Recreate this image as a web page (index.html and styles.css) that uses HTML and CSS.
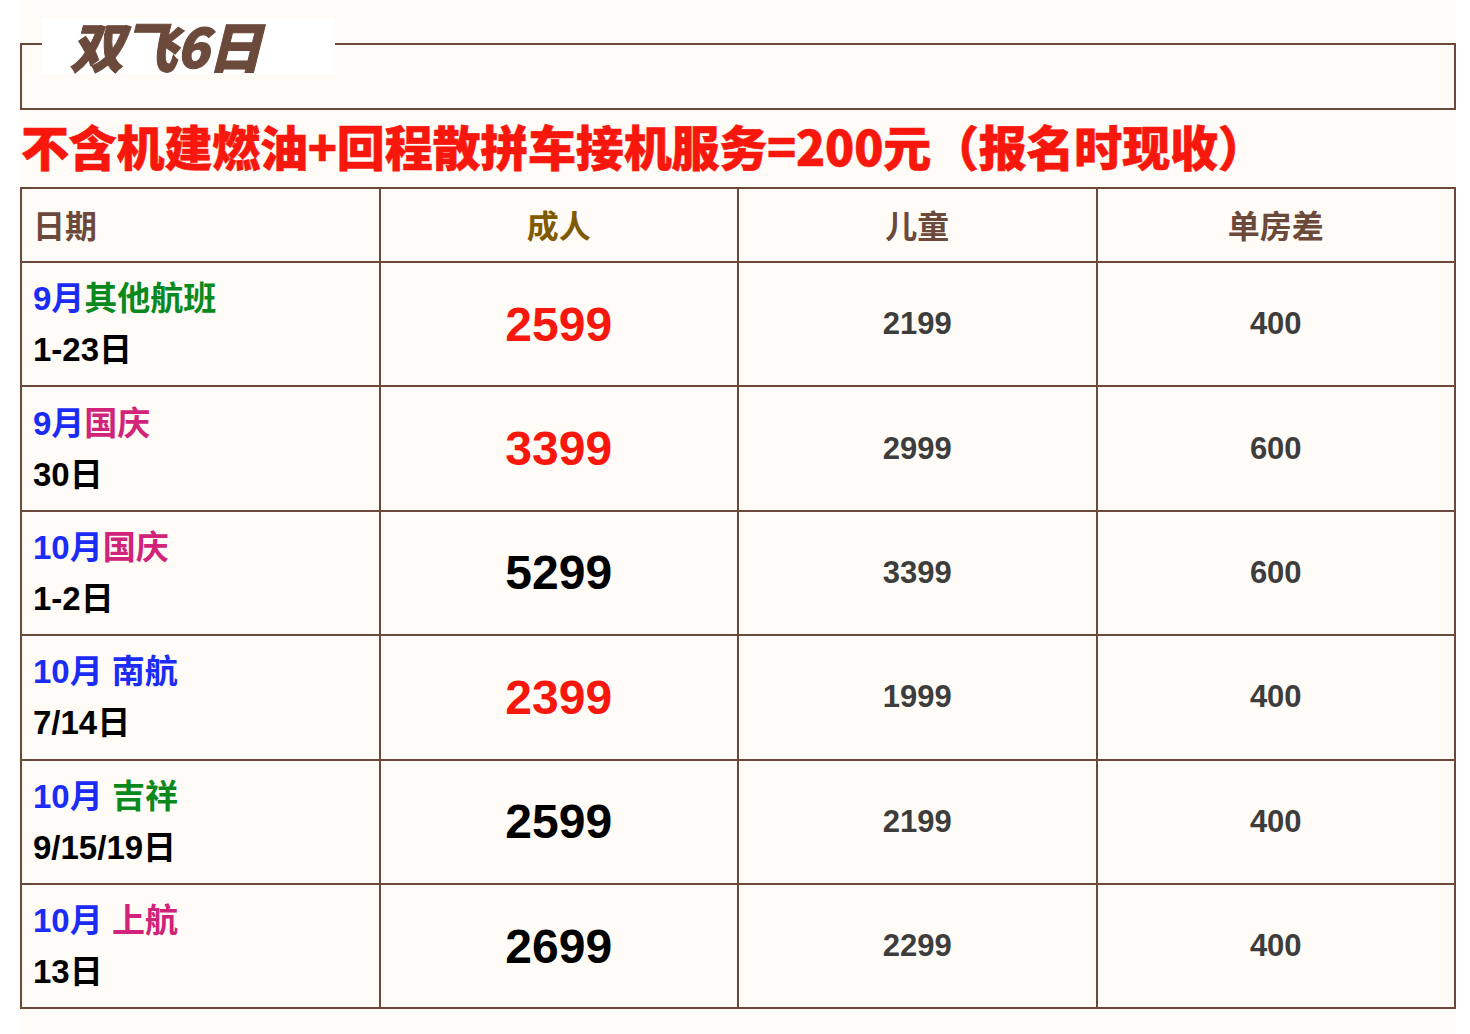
FILE: index.html
```html
<!DOCTYPE html>
<html lang="zh-CN">
<head>
<meta charset="utf-8">
<title>双飞6日</title>
<link rel="stylesheet" href="styles.css">
</head>
<body>
<div class="page">
  <div class="title-box">
    <div class="title-label">双飞6日</div>
  </div>
  <div class="notice">不含机建燃油+回程散拼车接机服务=200元（报名时现收）</div>
  <table class="price">
    <thead>
      <tr>
        <th class="c-date">日期</th>
        <th class="c-adult">成人</th>
        <th>儿童</th>
        <th>单房差</th>
      </tr>
    </thead>
    <tbody>
      <tr>
        <td class="c-date"><div class="l1"><span class="blue">9月</span><span class="green">其他航班</span></div><div class="l2">1-23日</div></td>
        <td class="adult red">2599</td>
        <td class="num">2199</td>
        <td class="num">400</td>
      </tr>
      <tr>
        <td class="c-date"><div class="l1"><span class="blue">9月</span><span class="pink">国庆</span></div><div class="l2">30日</div></td>
        <td class="adult red">3399</td>
        <td class="num">2999</td>
        <td class="num">600</td>
      </tr>
      <tr>
        <td class="c-date"><div class="l1"><span class="blue">10月</span><span class="pink">国庆</span></div><div class="l2">1-2日</div></td>
        <td class="adult">5299</td>
        <td class="num">3399</td>
        <td class="num">600</td>
      </tr>
      <tr>
        <td class="c-date"><div class="l1"><span class="blue">10月 南航</span></div><div class="l2">7/14日</div></td>
        <td class="adult red">2399</td>
        <td class="num">1999</td>
        <td class="num">400</td>
      </tr>
      <tr>
        <td class="c-date"><div class="l1"><span class="blue">10月 </span><span class="green">吉祥</span></div><div class="l2">9/15/19日</div></td>
        <td class="adult">2599</td>
        <td class="num">2199</td>
        <td class="num">400</td>
      </tr>
      <tr>
        <td class="c-date"><div class="l1"><span class="blue">10月 </span><span class="pink">上航</span></div><div class="l2">13日</div></td>
        <td class="adult">2699</td>
        <td class="num">2299</td>
        <td class="num">400</td>
      </tr>
    </tbody>
  </table>
</div>
</body>
</html>
```

FILE: styles.css
```css
html, body {
  margin: 0;
  padding: 0;
  background: #ffffff;
}
body {
  font-family: "Liberation Sans", "Noto Sans CJK SC", sans-serif;
}
.page {
  margin-left: 20px;
  width: 1436px;
  min-height: 1034px;
  background: #fffbf6;
  padding-top: 43px;
  box-sizing: border-box;
}
.title-box {
  position: relative;
  height: 63px;
  border: 2px solid #6b4a3c;
}
.title-label {
  position: absolute;
  left: 20px;
  top: -27px;
  width: 293px;
  height: 56px;
  background: #ffffff;
  box-sizing: border-box;
  padding-left: 28px;
  font-family: "Noto Sans CJK SC", sans-serif;
  font-weight: 900;
  font-style: italic;
  font-size: 54px;
  line-height: 54px;
  letter-spacing: -1px;
  color: #6b4a3c;
  -webkit-text-stroke: 1px #6b4a3c;
}
.notice {
  height: 77px;
  line-height: 71px;
  padding-bottom: 6px;
  box-sizing: border-box;
  padding-left: 1px;
  font-family: "Noto Sans CJK SC", sans-serif;
  font-weight: 900;
  font-size: 48px;
  letter-spacing: -0.2px;
  color: #f8170d;
  white-space: nowrap;
  -webkit-text-stroke: 0.6px #f8170d;
}
.price {
  width: 1436px;
  border-collapse: collapse;
  table-layout: fixed;
  border: 2px solid #6b4a3c;
}
.price th, .price td {
  border: 2px solid #6b4a3c;
  text-align: center;
  vertical-align: middle;
  padding: 0 11px;
  font-weight: bold;
}
.price th {
  height: 70px;
  font-size: 32px;
  color: #6b4a3c;
  padding-bottom: 2px;
}
.price th.c-date, .price td.c-date {
  text-align: left;
}
.price th.c-adult {
  color: #7f5a00;
}
.price td {
  height: 122.4px;
}
.l1, .l2 {
  font-size: 33px;
  line-height: 51px;
  white-space: nowrap;
}
.l2 {
  color: #000000;
}
.blue { color: #1a2cf5; }
.green { color: #0a8a1e; }
.pink { color: #d1237a; }
.adult {
  font-size: 48px;
  color: #000000;
}
.adult.red {
  color: #f8170d;
}
.num {
  font-size: 31px;
  color: #3d3d3d;
}
```
